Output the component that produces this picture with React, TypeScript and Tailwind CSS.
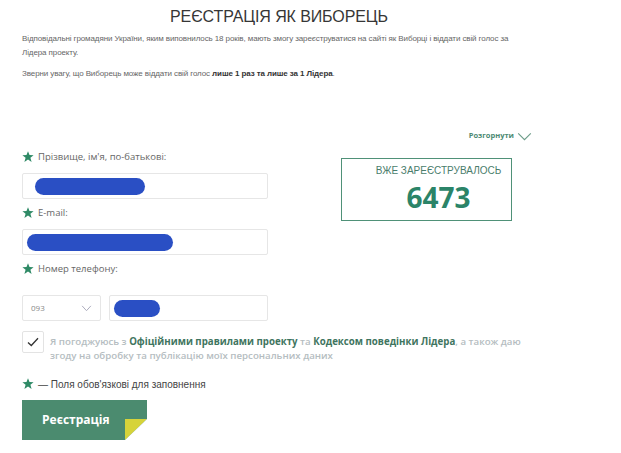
import React from 'react';

const sans = { fontFamily: '"Liberation Sans", Arial, sans-serif' };

const Star: React.FC = () => (
  <svg viewBox="0 0 12 12" className="w-[12px] h-[12px] shrink-0" aria-hidden>
    <path
      d="M6 0.3 L7.5 4.1 L11.6 4.2 L8.4 6.8 L9.6 10.9 L6 8.5 L2.4 10.9 L3.6 6.8 L0.4 4.2 L4.5 4.1 Z"
      fill="#2f8a66"
    />
  </svg>
);

const Label: React.FC<{ text: string }> = ({ text }) => (
  <div className="flex items-center gap-[4px] h-[14px] text-[9.5px] text-[#666]">
    <Star />
    <span>{text}</span>
  </div>
);

const Scribble: React.FC<{ w: number }> = ({ w }) => (
  <div className="h-[17px] rounded-full bg-[#2a4fc4]" style={{ width: w }} />
);

export default function App() {
  return (
    <div className="w-[621px] h-[453px] bg-white overflow-hidden" style={{ fontFamily: '"Open Sans", sans-serif' }}>
      <div className="w-[536px] pl-[22px]">
        <h1 className="pt-[5px] text-center text-[16px] leading-[24px] text-[#363636] tracking-[-0.1px]" style={sans}>
          РЕЄСТРАЦІЯ ЯК ВИБОРЕЦЬ
        </h1>
        <div className="mt-[3px] w-[496px] text-[8px] leading-[14px] tracking-[-0.1px] text-[#666]" style={sans}>
          <p>
            Відповідальні громадяни України, яким виповнилось 18 років, мають змогу зареєструватися на сайті як Виборці і
            віддати свій голос за Лідера проекту.
          </p>
          <p className="mt-[7px]">
            Зверни увагу, що Виборець може віддати свій голос <b className="text-[#333]">лише 1 раз та лише за 1 Лідера</b>.
          </p>
        </div>

        <div className="mt-[49px] flex justify-end items-center gap-[3px] h-[12px] pr-[4px]">
          <span className="text-[7.5px] font-bold text-[#4d8a73]">Розгорнути</span>
          <svg viewBox="0 0 16 10" className="w-[15px] h-[9px]" aria-hidden>
            <path d="M1 1.5 L8 8.5 L15 1.5" fill="none" stroke="#6e9d8a" strokeWidth="1.3" />
          </svg>
        </div>

        <div className="mt-[8px] flex">
          <div className="w-[246px]">
            <Label text="Прізвище, ім'я, по-батькові:" />
            <div className="mt-[9px] h-[26px] border border-[#e6e6e6] rounded-[2px] flex items-center pl-[12px]">
              <Scribble w={110} />
            </div>
            <div className="mt-[7px]">
              <Label text="E-mail:" />
            </div>
            <div className="mt-[9px] h-[26px] border border-[#e6e6e6] rounded-[2px] flex items-center pl-[4px]">
              <Scribble w={146} />
            </div>
            <div className="mt-[7px]">
              <Label text="Номер телефону:" />
            </div>
            <div className="mt-[19px] flex gap-[8px]">
              <div className="w-[79px] h-[26px] border border-[#e6e6e6] rounded-[2px] flex items-center justify-between pl-[8px] pr-[8px]">
                <span className="text-[8px] text-[#888]">093</span>
                <svg viewBox="0 0 12 8" className="w-[11px] h-[7px]" aria-hidden>
                  <path d="M1 1 L6 6.5 L11 1" fill="none" stroke="#aab" strokeWidth="1.1" />
                </svg>
              </div>
              <div className="flex-1 h-[26px] border border-[#e6e6e6] rounded-[2px] flex items-center pl-[4px]">
                <Scribble w={46} />
              </div>
            </div>
          </div>

          <div className="ml-[73px] mt-[8px] w-[171px] h-[63px] border border-[#4f9178] flex flex-col items-center pl-[24px]">
            <span className="mt-[5px] text-[10px] leading-[14px] text-[#4a7d6b]" style={sans}>
              ВЖЕ ЗАРЕЄСТРУВАЛОСЬ
            </span>
            <span className="mt-[1px] text-[28px] leading-[36px] font-bold text-[#2b8468]">6473</span>
          </div>
        </div>
      </div>

      <div className="pl-[22px] mt-[10px] flex gap-[6px]">
        <div className="w-[22px] h-[22px] border border-[#e3e3e3] rounded-[2px] flex items-center justify-center shrink-0">
          <svg viewBox="0 0 12 10" className="w-[12px] h-[10px]" aria-hidden>
            <path d="M1 5.5 L4.3 8.5 L11 1.2" fill="none" stroke="#333" strokeWidth="1.3" />
          </svg>
        </div>
        <p className="mt-[4px] w-[478px] text-[9.7px] leading-[14px] font-semibold text-[#b5bdc1]">
          Я погоджуюсь з <span className="font-bold text-[#3f7560]">Офіційними правилами проекту</span> та{' '}
          <span className="font-bold text-[#3f7560]">Кодексом поведінки Лідера</span>, а також даю
          <br />
          згоду на обробку та публікацію моїх персональних даних
        </p>
      </div>

      <div className="pl-[22px] mt-[14px] flex items-center gap-[4px] h-[14px] text-[10px] text-[#444]" style={sans}>
        <Star />
        <span>— Поля обов'язкові для заповнення</span>
      </div>

      <div className="pl-[22px] mt-[9px]">
        <button className="relative w-[125px] h-[40px] bg-[#4b8b6f] text-white text-[12px] font-bold flex items-center pl-[20px] overflow-hidden">
          Реєстрація
          <svg viewBox="0 0 22 21" className="absolute right-0 bottom-0 w-[22px] h-[21px]" aria-hidden>
            <polygon points="0,0 22,0 0,21" fill="#d6d33a" />
            <polygon points="22,0 22,21 0,21" fill="#ffffff" />
          </svg>
        </button>
      </div>
    </div>
  );
}
